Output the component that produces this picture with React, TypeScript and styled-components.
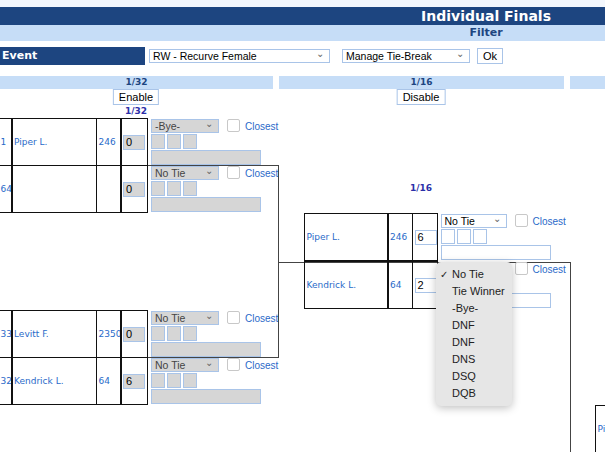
import React from "react";
import styled, { createGlobalStyle } from "styled-components";

const Global = createGlobalStyle`
  body { margin: 0; background: #fff; font-family: "DejaVu Sans", Verdana, sans-serif; overflow: hidden; }
`;

const Page = styled.div`
  width: 972px;
  background: #f3f7fd;
  padding-top: 7px;
`;
const TitleBar = styled.div`
  background: #1d4580;
  color: #fff;
  font-weight: bold;
  font-size: 14px;
  text-align: center;
  height: 18px;
  line-height: 19px;
`;
const FilterBar = styled.div`
  background: #c6ddf7;
  color: #1d4580;
  font-weight: bold;
  font-size: 11px;
  text-align: center;
  height: 16px;
  line-height: 16px;
`;
const EventRow = styled.div`
  display: flex;
  align-items: center;
  gap: 4px;
  height: 24px;
  background: #fff;
  padding-top: 3px;
  box-sizing: border-box;
  height: 27px;
`;
const EventLabel = styled.div`
  width: 143px;
  height: 18px;
  line-height: 18px;
  padding-left: 2px;
  background: #1d4580;
  color: #fff;
  font-weight: bold;
  font-size: 11px;
`;
const Select = styled.div<{ $w: number; $grey?: boolean }>`
  width: ${(p) => p.$w}px;
  height: 14px;
  box-sizing: border-box;
  border: 1px solid #a9c4e8;
  background: ${(p) => (p.$grey ? "#d6d6d6" : "#fff")};
  font-family: "Liberation Sans", Arial, sans-serif;
  font-size: 10.5px;
  line-height: 12px;
  padding-left: 3px;
  display: flex;
  justify-content: space-between;
  align-items: center;
  color: ${(p) => (p.$grey ? "#444" : "#000")};
  &::after { content: "⌄"; font-size: 10px; color: #666; padding-right: 5px; margin-top: -5px; }
`;
const Btn = styled.div`
  border: 1px solid #a9c4e8;
  background: #fff;
  font-family: "Liberation Sans", Arial, sans-serif;
  font-size: 11px;
  padding: 1px 5px;
  line-height: 12px;
`;
const Board = styled.div`
  position: relative;
  height: 386px;
  background: #fff;
`;
const RoundHead = styled.div<{ $x: number; $w: number }>`
  position: absolute;
  top: 8px;
  left: ${(p) => p.$x}px;
  width: ${(p) => p.$w}px;
  height: 13px;
  background: #c6ddf7;
  color: #1d4580;
  font-size: 9px;
  font-weight: bold;
  text-align: center;
  line-height: 13px;
`;
const Placed = styled.div<{ $x: number; $y: number }>`
  position: absolute;
  left: ${(p) => p.$x}px;
  top: ${(p) => p.$y}px;
  transform: translateX(-50%);
`;
const SmallLabel = styled.div`
  color: #2b2fa8;
  font-size: 9px;
  font-weight: bold;
`;
const MatchRow = styled.div<{ $x: number; $y: number }>`
  position: absolute;
  left: ${(p) => p.$x}px;
  top: ${(p) => p.$y}px;
  display: flex;
  height: 48px;
`;
const Cell = styled.div<{ $w: number; $noLeft?: boolean }>`
  width: ${(p) => p.$w}px;
  box-sizing: border-box;
  border: 1.5px solid #111;
  border-left-width: ${(p) => (p.$noLeft ? 0 : 1.5)}px;
  margin-left: -1.5px;
  display: flex;
  align-items: center;
  padding-left: 2px;
  color: #2a6ac9;
  font-size: 9px;
  white-space: nowrap;
  overflow: hidden;
`;
const ScoreBox = styled.div<{ $grey?: boolean }>`
  width: 22px;
  height: 15px;
  box-sizing: border-box;
  border: 1px solid #a9c4e8;
  background: ${(p) => (p.$grey ? "#d6d6d6" : "#fff")};
  color: #000;
  font-family: "Liberation Sans", Arial, sans-serif;
  font-size: 11px;
  padding-left: 2px;
  line-height: 13px;
`;
const TieBlock = styled.div`
  display: flex;
  flex-direction: column;
  gap: 1px;
  margin-left: 3px;
  padding-top: 1px;
`;
const TieTop = styled.div`
  display: flex;
  align-items: flex-start;
`;
const Check = styled.div`
  width: 11px;
  height: 11px;
  border: 1px solid #c8c8c8;
  border-radius: 2px;
  margin: 0 5px 0 8px;
  background: #fff;
`;
const Closest = styled.span`
  color: #2a6ac9;
  font-family: "Liberation Sans", Arial, sans-serif;
  font-size: 10px;
  margin-top: 2px;
`;
const Boxes = styled.div`
  display: flex;
  gap: 2px;
`;
const Mini = styled.div<{ $grey?: boolean; $w?: number }>`
  width: ${(p) => p.$w ?? 14}px;
  height: 15px;
  box-sizing: border-box;
  border: 1px solid #a9c4e8;
  background: ${(p) => (p.$grey ? "#d6d6d6" : "#fff")};
`;
const Line = styled.div<{ $x: number; $y: number; $w: number; $h: number }>`
  position: absolute;
  left: ${(p) => p.$x}px;
  top: ${(p) => p.$y}px;
  width: ${(p) => p.$w}px;
  height: ${(p) => p.$h}px;
  box-sizing: border-box;
  border-top: 1px solid #444;
  border-right: 1px solid #444;
  border-bottom: ${(p) => (p.$h > 2 ? "1px solid #444" : "0")};
`;
const VLine = styled.div<{ $x: number; $y: number; $h: number }>`
  position: absolute;
  left: ${(p) => p.$x}px;
  top: ${(p) => p.$y}px;
  height: ${(p) => p.$h}px;
  border-left: 1.5px solid #444;
`;
const Menu = styled.div`
  position: absolute;
  left: 436px;
  top: 194px;
  width: 76px;
  padding: 4px 0;
  background: #e6e6e6;
  border-radius: 5px;
  box-shadow: 0 2px 8px rgba(0, 0, 0, 0.25);
  font-family: "Liberation Sans", Arial, sans-serif;
  font-size: 11px;
  color: #222;
`;
const MenuItem = styled.div`
  height: 17px;
  line-height: 17px;
  padding-left: 16px;
  position: relative;
`;
const Tick = styled.span`
  position: absolute;
  left: 4px;
  font-size: 10px;
`;

type M = { x: number; y: number; seed?: string; name: string; score: string; set: string; tie: string; grey: boolean; cols: number[] };

function Match({ m }: { m: M }) {
  return (
    <MatchRow $x={m.x} $y={m.y}>
      {m.seed !== undefined && <Cell $w={m.cols[0]} $noLeft>{m.seed}</Cell>}
      <Cell $w={m.cols[1]}>{m.name}</Cell>
      <Cell $w={m.cols[2]}>{m.score}</Cell>
      <Cell $w={m.cols[3]}>
        <ScoreBox $grey={m.grey}>{m.set}</ScoreBox>
      </Cell>
      <TieBlock>
        <TieTop>
          <Select $w={m.grey ? 68 : 66} $grey={m.grey}>{m.tie}</Select>
          <Check />
          <Closest>Closest</Closest>
        </TieTop>
        <Boxes>
          <Mini $grey={m.grey} />
          <Mini $grey={m.grey} />
          <Mini $grey={m.grey} />
        </Boxes>
        <Mini $grey={m.grey} $w={110} />
      </TieBlock>
    </MatchRow>
  );
}

const c1 = [14, 86, 26, 28];
const c2 = [0, 85, 26, 26];
const matches: M[] = [
  { x: 0, y: 50, seed: "1", name: "Piper L.", score: "246", set: "0", tie: "-Bye-", grey: true, cols: c1 },
  { x: 0, y: 97, seed: "64", name: "", score: "", set: "0", tie: "No Tie", grey: true, cols: c1 },
  { x: 0, y: 242, seed: "33", name: "Levitt F.", score: "2350", set: "0", tie: "No Tie", grey: true, cols: c1 },
  { x: 0, y: 289, seed: "32", name: "Kendrick L.", score: "64", set: "6", tie: "No Tie", grey: true, cols: c1 },
  { x: 305, y: 145, name: "Piper L.", score: "246", set: "6", tie: "No Tie", grey: false, cols: c2 },
  { x: 305, y: 193, name: "Kendrick L.", score: "64", set: "2", tie: "No Tie", grey: false, cols: c2 },
];

export default function App() {
  return (
    <>
      <Global />
      <Page>
        <TitleBar>Individual Finals</TitleBar>
        <FilterBar>Filter</FilterBar>
        <EventRow>
          <EventLabel>Event</EventLabel>
          <Select $w={181}>RW - Recurve Female</Select>
          <Select $w={128} style={{ marginLeft: 8 }}>Manage Tie-Break</Select>
          <Btn style={{ marginLeft: 3 }}>Ok</Btn>
        </EventRow>
        <Board>
          <RoundHead $x={0} $w={273}>1/32</RoundHead>
          <RoundHead $x={279} $w={285}>1/16</RoundHead>
          <RoundHead $x={570} $w={402}></RoundHead>
          <Placed $x={136} $y={21}><Btn>Enable</Btn></Placed>
          <Placed $x={421} $y={21}><Btn>Disable</Btn></Placed>
          <Placed $x={136} $y={38}><SmallLabel>1/32</SmallLabel></Placed>
          <Placed $x={421} $y={115}><SmallLabel>1/16</SmallLabel></Placed>
          <Line $x={125} $y={97} $w={154} $h={193} />
          <Line $x={279} $y={194} $w={291} $h={1} />
          <VLine $x={570} $y={194} $h={200} />
          <MatchRow $x={596} $y={337}>
            <Cell $w={20}>Pi</Cell>
          </MatchRow>
          {matches.map((m, i) => (
            <Match key={i} m={m} />
          ))}
          <Menu>
            <MenuItem><Tick>✓</Tick>No Tie</MenuItem>
            <MenuItem>Tie Winner</MenuItem>
            <MenuItem>-Bye-</MenuItem>
            <MenuItem>DNF</MenuItem>
            <MenuItem>DNF</MenuItem>
            <MenuItem>DNS</MenuItem>
            <MenuItem>DSQ</MenuItem>
            <MenuItem>DQB</MenuItem>
          </Menu>
        </Board>
      </Page>
    </>
  );
}
